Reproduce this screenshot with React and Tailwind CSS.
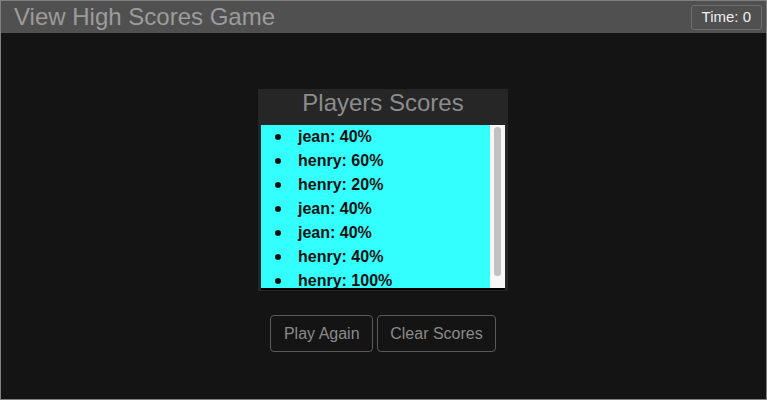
import React from "react";

const scores = [
  { name: "jean", pct: 40 },
  { name: "henry", pct: 60 },
  { name: "henry", pct: 20 },
  { name: "jean", pct: 40 },
  { name: "jean", pct: 40 },
  { name: "henry", pct: 40 },
  { name: "henry", pct: 100 },
  { name: "jean", pct: 60 },
];

const App = () => {
  return (
    <div
      className="w-[767px] h-[400px] border border-[#808080] bg-[#141414] flex flex-col overflow-hidden"
      style={{ fontFamily: '"Liberation Sans", Arial, sans-serif' }}
    >
      <div className="h-[32px] bg-[#505050] flex items-center justify-between pl-[13px] pr-[4px] shrink-0">
        <h1 className="text-[24px] leading-none text-[#9c9c9c]">View High Scores Game</h1>
        <div className="h-[25px] px-[10px] flex items-center border border-[#6e6e6e] rounded-[3px] text-[15px] text-[#eeeeee]">
          Time: 0
        </div>
      </div>

      <div className="flex flex-col items-center pt-[56px]">
        {/* scores panel */}
        <div className="w-[250px] mr-[1px] bg-[#262626] px-[3px] pb-[1px]">
          <h2 className="h-[36px] pb-[8px] flex items-center justify-center text-[24px] text-[#8c8c8c]">
            Players Scores
          </h2>
          <div className="h-[165px] flex border-b-2 border-black overflow-hidden">
            <ul className="flex-1 bg-[#33ffff] text-[16px] font-bold leading-6 text-[#111111] overflow-hidden">
              {scores.map((s, i) => (
                <li key={i} className="flex items-center pl-[14px]">
                  <span className="w-[6px] h-[6px] rounded-full bg-[#111111] shrink-0"></span>
                  <span className="ml-[17px]">
                    {s.name}: {s.pct}%
                  </span>
                </li>
              ))}
            </ul>
            <div className="w-[15px] bg-[#f7f7f7] pt-[2px] px-[4px] pb-[12px] flex">
              <div className="flex-1 bg-[#c1c1c1] rounded-full"></div>
            </div>
          </div>
        </div>

        <div className="flex gap-[4px] mt-[24px] mr-[1px]">
          <button className="w-[103px] h-[37px] border border-[#5a5a5a] rounded-[4px] text-[16px] text-[#8a8a8a]">
            Play Again
          </button>
          <button className="h-[37px] px-[12px] border border-[#5a5a5a] rounded-[4px] text-[16px] text-[#8a8a8a]">
            Clear Scores
          </button>
        </div>
      </div>
    </div>
  );
};

export default App;
